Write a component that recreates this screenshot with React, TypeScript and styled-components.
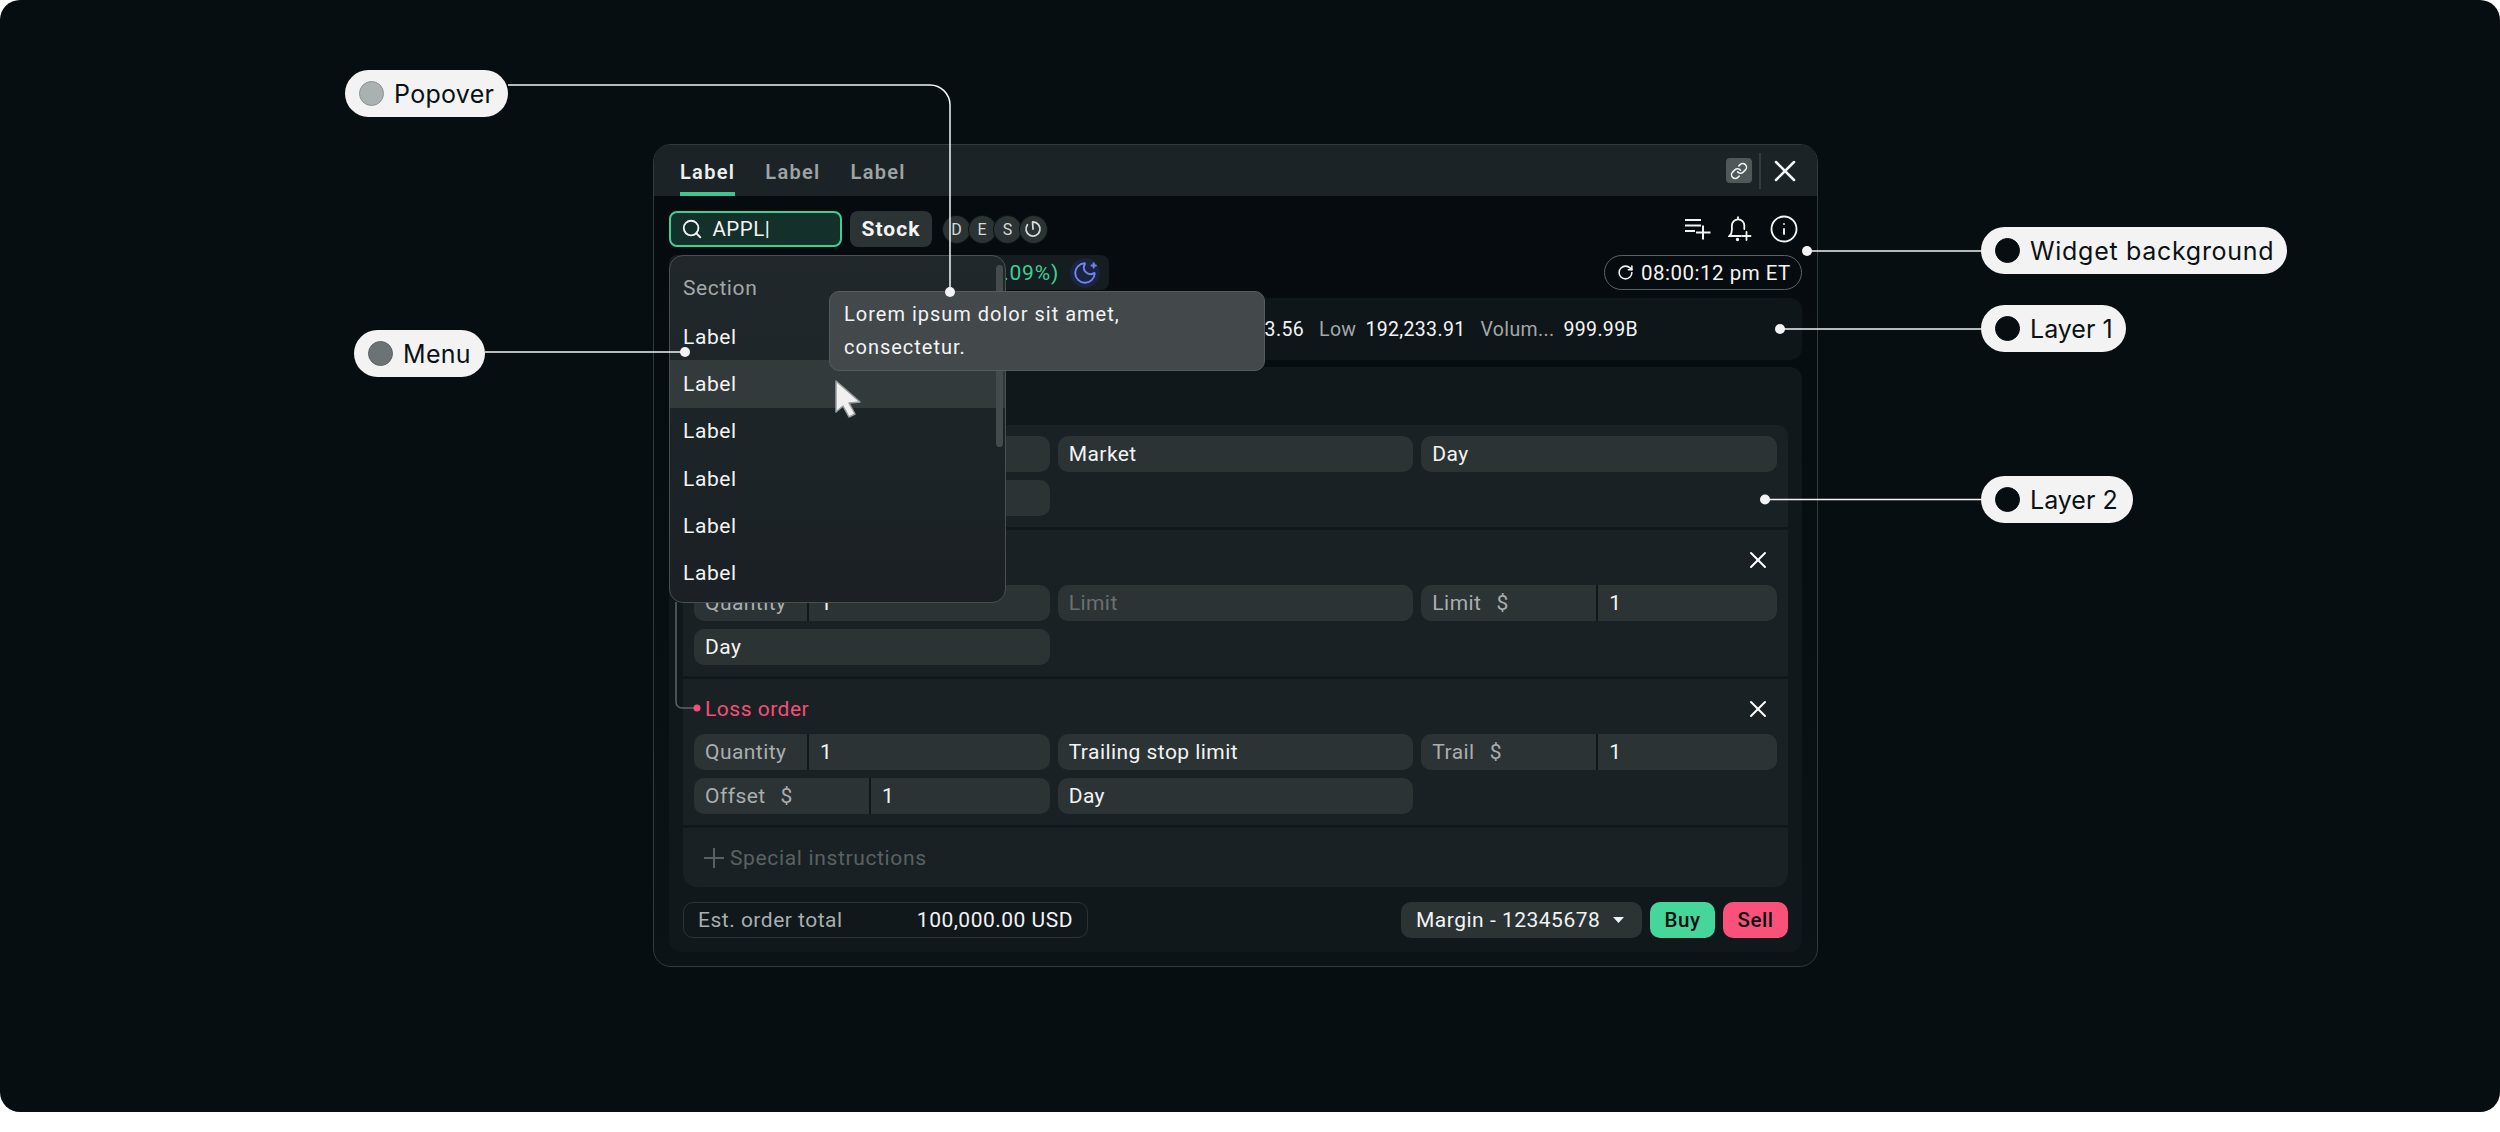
import { ReactNode } from 'react';
import styled, { createGlobalStyle } from 'styled-components';
import { Info, Link, MoonStar, RotateCw, Search, X } from 'lucide-react';

const GlobalStyle = createGlobalStyle`
  html, body {
    margin: 0;
    background: #fff;
  }
  * {
    box-sizing: border-box;
  }
`;

const Canvas = styled.div`
  position: relative;
  width: 2500px;
  height: 1112px;
  padding: 144px 0 0 653px;
  overflow: hidden;
  border-radius: 20px;
  background: #070e11;
  font-family: Roboto, 'Liberation Sans', sans-serif;
`;

const Widget = styled.section`
  position: relative;
  display: flex;
  flex-direction: column;
  width: 1165px;
  height: 823px;
  border: 1.5px solid #34393b;
  border-radius: 18px;
  overflow: hidden;
  background: linear-gradient(180deg, #050b0e 10%, #0b1316 100%);
`;

const TabBar = styled.header`
  display: flex;
  flex: none;
  align-items: center;
  height: 51px;
  padding: 0 14.5px 0 26px;
  background: #1b2326;
`;

const Tabs = styled.nav`
  display: flex;
  gap: 30px;
  flex: 1;
  height: 100%;
`;

const Tab = styled.span<{ $active?: boolean }>`
  display: flex;
  align-items: center;
  height: 100%;
  padding-top: 3px;
  font-size: 20px;
  font-weight: 600;
  letter-spacing: 1.3px;
  color: ${(p) => (p.$active ? '#eef0f0' : '#9ea3a4')};
  box-shadow: ${(p) => (p.$active ? 'inset 0 -4px 0 #3fc592' : 'none')};
`;

const LinkButton = styled.button`
  display: flex;
  align-items: center;
  justify-content: center;
  width: 26px;
  height: 25px;
  padding: 0;
  border: 0;
  border-radius: 4px;
  background: #50585a;
  color: #f0f2f2;
`;

const BarDivider = styled.span`
  width: 1.5px;
  height: 36px;
  margin: 0 6px 0 7px;
  background: #343b3d;
`;

const Body = styled.div`
  display: flex;
  flex-direction: column;
  flex: 1;
  padding: 15px 15px 14px;
`;

const Toolbar = styled.div`
  display: flex;
  align-items: center;
  gap: 8px;
  height: 36px;
`;

const SearchBox = styled.div`
  display: flex;
  align-items: center;
  gap: 9.5px;
  width: 173px;
  height: 36px;
  padding-left: 10px;
  border: 2px solid #3fcf95;
  border-radius: 8px;
  background: #14302a;
  color: #f2f4f4;
  font-size: 20.5px;
  letter-spacing: 0.5px;
`;

const StockButton = styled.button`
  width: 82px;
  height: 36px;
  padding: 0;
  border: 0;
  border-radius: 8px;
  background: #2c3335;
  color: #f2f4f4;
  font: 700 21px Roboto, sans-serif;
  letter-spacing: 1px;
`;

const Badges = styled.div`
  display: flex;
  margin-left: 3px;
`;

const Badge = styled.span`
  display: flex;
  align-items: center;
  justify-content: center;
  width: 27px;
  height: 27px;
  margin-right: -1.5px;
  border-radius: 50%;
  background: #2c3335;
  box-shadow: 0 0 0 1px #0d1416;
  color: #d6d9d9;
  font-size: 16px;
`;

const ToolIcons = styled.div`
  display: flex;
  align-items: center;
  gap: 17px;
  margin-left: auto;
  padding-right: 3px;
  color: #f2f4f4;
`;

const QuoteRow = styled.div`
  display: flex;
  justify-content: space-between;
  height: 35px;
  margin-top: 8px;
`;

const QuoteChip = styled.div`
  display: flex;
  align-items: center;
  justify-content: flex-end;
  gap: 11px;
  width: 440px;
  padding-right: 9px;
  border-radius: 8px;
  background: #151d20;
  color: #3fcf95;
  font-size: 21px;
  letter-spacing: 0.8px;
`;

const MoonBadge = styled.span`
  display: flex;
  align-items: center;
  justify-content: center;
  width: 30px;
  height: 30px;
  border-radius: 50%;
  background: #1a2340;
  color: #6f86ea;
`;

const ClockChip = styled.div`
  display: flex;
  align-items: center;
  gap: 7px;
  width: 198px;
  padding-left: 12px;
  border: 1.5px solid #5c6365;
  border-radius: 18px;
  color: #f2f4f4;
  font-size: 20.5px;
  letter-spacing: 0.5px;
`;

const StatsBar = styled.div`
  display: flex;
  align-items: center;
  justify-content: flex-end;
  gap: 15px;
  height: 62px;
  margin-top: 8px;
  padding-right: 164px;
  border-radius: 12px;
  background: #0f1619;
  font-size: 19.5px;
  letter-spacing: 0.35px;
`;

const Stat = styled.div`
  display: flex;
  gap: 9px;
`;

const StatLabel = styled.span`
  color: #a3a8a9;
`;

const StatValue = styled.span`
  color: #f2f4f4;
`;

const OrderPanel = styled.div`
  display: flex;
  flex-direction: column;
  flex: 1;
  gap: 3px;
  margin-top: 7px;
  padding: 58px 14px 14px;
  border-radius: 12px;
  background: #10181b;
`;

const Card = styled.div<{ $first?: boolean }>`
  padding: 0 11px 11px;
  border-radius: ${(p) => (p.$first ? '10px 10px 0 0' : '0')};
  background: #192124;
`;

const SpecialRow = styled.div`
  display: flex;
  align-items: center;
  gap: 6px;
  height: 59px;
  padding-left: 21px;
  border-radius: 0 0 14px 14px;
  background: #192124;
  color: #5a6163;
  font-size: 21px;
  letter-spacing: 0.65px;
`;

const CardHeader = styled.div`
  display: flex;
  align-items: center;
  justify-content: space-between;
  height: 55px;
  padding: 5px 5px 0 0;
  color: #fff;
`;

const LossTitle = styled.span`
  margin-left: 11px;
  color: #f54f77;
  font-size: 21px;
  letter-spacing: 0.5px;
`;

const FieldGrid = styled.div`
  display: grid;
  grid-template-columns: repeat(3, 1fr);
  gap: 8px;
  padding-top: 11px;
`;

const HeadedGrid = styled(FieldGrid)`
  padding-top: 0;
`;

const FieldBox = styled.div`
  display: flex;
  align-items: center;
  height: 36px;
  border-radius: 10px;
  overflow: hidden;
  background: #2c3335;
  font-size: 21px;
  letter-spacing: 0.45px;
`;

const FieldLabel = styled.span<{ $width: number }>`
  display: flex;
  gap: 15px;
  flex: none;
  width: ${(p) => p.$width}px;
  height: 100%;
  align-items: center;
  padding-left: 11px;
  border-right: 2px solid #11181b;
  color: #a9aeaf;
`;

const FieldValue = styled.span<{ $muted?: boolean }>`
  padding-left: 11px;
  color: ${(p) => (p.$muted ? '#6a7072' : '#f2f4f4')};
`;

const Footer = styled.footer`
  display: flex;
  align-items: center;
  height: 36px;
  margin-top: 12px;
  font-size: 21px;
  letter-spacing: 0.5px;
`;

const TotalBox = styled.div`
  display: flex;
  align-items: center;
  justify-content: space-between;
  width: 405px;
  height: 36px;
  padding: 0 14px;
  border: 1.5px solid #2c3335;
  border-radius: 10px;
  color: #a9aeaf;
`;

const TotalValue = styled.span`
  color: #f2f4f4;
`;

const AccountSelect = styled.div`
  display: flex;
  align-items: center;
  justify-content: space-between;
  width: 241px;
  height: 36px;
  margin-left: auto;
  padding: 0 18px 0 15px;
  border-radius: 10px;
  background: #2c3335;
  color: #f2f4f4;
`;

const TradeButton = styled.button<{ $color: string }>`
  width: 65px;
  height: 36px;
  margin-left: 8px;
  padding: 0;
  border: 0;
  border-radius: 10px;
  background: ${(p) => p.$color};
  color: #0a1114;
  font: 500 20.5px Roboto, sans-serif;
  letter-spacing: 0.5px;
`;

const Menu = styled.div`
  position: absolute;
  left: 15px;
  top: 110px;
  width: 337px;
  height: 348px;
  padding-top: 8px;
  overflow: hidden;
  border: 1.5px solid #4a5052;
  border-radius: 14px;
  background: linear-gradient(180deg, #20282b 0%, #1a2023 100%);
`;

const MenuSection = styled.div`
  display: flex;
  align-items: center;
  height: 47px;
  margin-bottom: 2px;
  padding-left: 13px;
  color: #a3a8a9;
  font-size: 21px;
  letter-spacing: 0.6px;
`;

const MenuItem = styled.div<{ $hover?: boolean }>`
  display: flex;
  align-items: center;
  height: 47.3px;
  padding-left: 13px;
  background: ${(p) => (p.$hover ? '#333a3c' : 'transparent')};
  color: #f2f4f4;
  font-size: 21px;
  letter-spacing: 0.6px;
`;

const ScrollThumb = styled.span`
  position: absolute;
  right: 2px;
  top: 9px;
  width: 7px;
  height: 182px;
  border-radius: 4px;
  background: #444b4d;
`;

const Popover = styled.div`
  position: absolute;
  left: 175px;
  top: 146px;
  width: 436px;
  height: 80px;
  padding: 6px 14px;
  border: 1.5px solid #565c5e;
  border-radius: 10px;
  background: #43494b;
  color: #f2f4f4;
  font-size: 20px;
  line-height: 33px;
  letter-spacing: 1px;
`;

const Callout = styled.div<{ $x: number; $y: number; $w: number; $track?: number }>`
  position: absolute;
  left: ${(p) => p.$x}px;
  top: ${(p) => p.$y}px;
  display: flex;
  align-items: center;
  gap: 10px;
  width: ${(p) => p.$w}px;
  height: 47px;
  padding-left: 14px;
  border-radius: 24px;
  background: #f3f3f3;
  color: #0b1114;
  font: 400 25px Inter, sans-serif;
  letter-spacing: ${(p) => p.$track ?? 0.3}px;
`;

const Swatch = styled.span<{ $fill: string; $edge?: string }>`
  flex: none;
  width: 25px;
  height: 25px;
  border-radius: 50%;
  border: 1px solid ${(p) => p.$edge ?? p.$fill};
  background: ${(p) => p.$fill};
`;

const Overlay = styled.svg`
  position: absolute;
  left: 0;
  top: 0;
  pointer-events: none;
`;

const TimerGlyph = () => (
  <svg width="18" height="18" viewBox="0 0 18 18" fill="none" stroke="currentColor" strokeWidth="1.8" strokeLinecap="round">
    <path d="M9 2a7 7 0 1 1-5.6 2.8" />
    <path d="M8.6 2.2L9 9" />
  </svg>
);

const QueueAdd = () => (
  <svg width="26" height="22" viewBox="0 0 26 22" fill="none" stroke="currentColor" strokeWidth="2">
    <path d="M0 2h16M0 7.5h16M0 13h10" />
    <path d="M18 7.5v14M11 14.5h14.5" />
  </svg>
);

const BellAdd = () => (
  <svg width="24" height="26" viewBox="0 0 24 26" fill="none" stroke="currentColor" strokeWidth="1.8" strokeLinecap="round">
    <path d="M10 1.2v1.6" />
    <path d="M13 20H1.5c1.6-1.4 2.4-3 2.4-6V9.5a6.2 6.2 0 0 1 12.4 0V13" />
    <circle cx="9.5" cy="23.5" r="0.8" />
    <path d="M18.5 16v8M14.5 20h8" />
  </svg>
);

const Caret = () => (
  <svg width="11" height="6" viewBox="0 0 11 6" fill="#f2f4f4">
    <path d="M0 0h11L5.5 6z" />
  </svg>
);

const SmallPlus = () => (
  <svg width="20" height="20" viewBox="0 0 20 20" stroke="#5a6163" strokeWidth="2">
    <path d="M10 0v20M0 10h20" />
  </svg>
);

const Field = ({ label, width, children, muted }: { label?: ReactNode; width?: number; children?: ReactNode; muted?: boolean }) => (
  <FieldBox>
    {label && <FieldLabel $width={width ?? 115}>{label}</FieldLabel>}
    <FieldValue $muted={muted}>{children}</FieldValue>
  </FieldBox>
);

const Money = ({ name }: { name: string }) => (
  <>
    <span>{name}</span>
    <span>$</span>
  </>
);

const labels = ['Label', 'Label', 'Label', 'Label', 'Label', 'Label'];

const App = () => {
  return (
    <>
      <GlobalStyle />
      <Canvas>
        <Widget>
          <TabBar>
            <Tabs>
              <Tab $active>Label</Tab>
              <Tab>Label</Tab>
              <Tab>Label</Tab>
            </Tabs>
            <LinkButton>
              <Link size={18} strokeWidth={2} />
            </LinkButton>
            <BarDivider />
            <X size={36} color="#f2f4f4" strokeWidth={1.7} />
          </TabBar>
          <Body>
            <Toolbar>
              <SearchBox>
                <Search size={22} strokeWidth={2} />
                APPL|
              </SearchBox>
              <StockButton>Stock</StockButton>
              <Badges>
                <Badge>D</Badge>
                <Badge>E</Badge>
                <Badge>S</Badge>
                <Badge>
                  <TimerGlyph />
                </Badge>
              </Badges>
              <ToolIcons>
                <QueueAdd />
                <BellAdd />
                <Info size={30} strokeWidth={1.5} />
              </ToolIcons>
            </Toolbar>
            <QuoteRow>
              <QuoteChip>
                +0.09%)
                <MoonBadge>
                  <MoonStar size={26} strokeWidth={1.8} />
                </MoonBadge>
              </QuoteChip>
              <ClockChip>
                <RotateCw size={17} strokeWidth={2.2} />
                08:00:12 pm ET
              </ClockChip>
            </QuoteRow>
            <StatsBar>
              <StatValue>192,233.56</StatValue>
              <Stat>
                <StatLabel>Low</StatLabel>
                <StatValue>192,233.91</StatValue>
              </Stat>
              <Stat>
                <StatLabel>Volum...</StatLabel>
                <StatValue>999.99B</StatValue>
              </Stat>
            </StatsBar>
            <OrderPanel>
              <Card $first>
                <FieldGrid>
                  <Field />
                  <Field>Market</Field>
                  <Field>Day</Field>
                  <Field />
                </FieldGrid>
              </Card>
              <Card>
                <CardHeader>
                  <span />
                  <X size={28} strokeWidth={1.7} />
                </CardHeader>
                <HeadedGrid>
                  <Field label="Quantity">1</Field>
                  <Field muted>Limit</Field>
                  <Field label={<Money name="Limit" />} width={177}>1</Field>
                  <Field>Day</Field>
                </HeadedGrid>
              </Card>
              <Card>
                <CardHeader>
                  <LossTitle>Loss order</LossTitle>
                  <X size={28} strokeWidth={1.7} />
                </CardHeader>
                <HeadedGrid>
                  <Field label="Quantity">1</Field>
                  <Field>Trailing stop limit</Field>
                  <Field label={<Money name="Trail" />} width={177}>1</Field>
                  <Field label={<Money name="Offset" />} width={177}>1</Field>
                  <Field>Day</Field>
                </HeadedGrid>
              </Card>
              <SpecialRow>
                <SmallPlus />
                Special instructions
              </SpecialRow>
              <Footer>
                <TotalBox>
                  Est. order total
                  <TotalValue>100,000.00 USD</TotalValue>
                </TotalBox>
                <AccountSelect>
                  Margin - 12345678
                  <Caret />
                </AccountSelect>
                <TradeButton $color="#47d69a">Buy</TradeButton>
                <TradeButton $color="#f9517a">Sell</TradeButton>
              </Footer>
            </OrderPanel>
          </Body>
          <Menu>
            <MenuSection>Section</MenuSection>
            {labels.map((label, i) => (
              <MenuItem key={i} $hover={i === 1}>
                {label}
              </MenuItem>
            ))}
            <ScrollThumb />
          </Menu>
          <Popover>
            Lorem ipsum dolor sit amet,
            <br />
            consectetur.
          </Popover>
        </Widget>

        <Overlay width="2500" height="1112" fill="none">
          <path d="M676 602V702a6 6 0 0 0 6 6H697" stroke="#5d6466" strokeWidth="1.5" />
          <circle cx="697" cy="708" r="3.5" fill="#f54f77" />
          <path d="M508 85H930a20 20 0 0 1 20 20V292" stroke="#f3f3f3" strokeWidth="1.5" />
          <circle cx="950" cy="292" r="5" fill="#f3f3f3" />
          <path d="M485 352H685" stroke="#f3f3f3" strokeWidth="1.5" />
          <circle cx="685" cy="352" r="5" fill="#f3f3f3" />
          <path d="M1807 251H1981" stroke="#f3f3f3" strokeWidth="1.5" />
          <circle cx="1807" cy="251" r="5" fill="#f3f3f3" />
          <path d="M1780 329H1981" stroke="#f3f3f3" strokeWidth="1.5" />
          <circle cx="1780" cy="329" r="5" fill="#f3f3f3" />
          <path d="M1765 499.5H1981" stroke="#f3f3f3" strokeWidth="1.5" />
          <circle cx="1765" cy="499.5" r="5" fill="#f3f3f3" />
          <path d="M836 381V412L843 406L849 417L855 414L849 403L860 402Z" fill="#f0f0f0" stroke="#9a9d9e" strokeWidth="1.5" strokeLinejoin="round" />
        </Overlay>

        <Callout $x={345} $y={70} $w={163}>
          <Swatch $fill="#abb0b1" $edge="#8c9193" />
          Popover
        </Callout>
        <Callout $x={354} $y={330} $w={131}>
          <Swatch $fill="#6d7375" $edge="#5c6264" />
          Menu
        </Callout>
        <Callout $x={1981} $y={227} $w={306} $track={0.7}>
          <Swatch $fill="#070e11" />
          Widget background
        </Callout>
        <Callout $x={1981} $y={305} $w={145} $track={0}>
          <Swatch $fill="#070e11" />
          Layer 1
        </Callout>
        <Callout $x={1981} $y={476} $w={152} $track={0}>
          <Swatch $fill="#070e11" />
          Layer 2
        </Callout>
      </Canvas>
    </>
  );
};

export default App;
